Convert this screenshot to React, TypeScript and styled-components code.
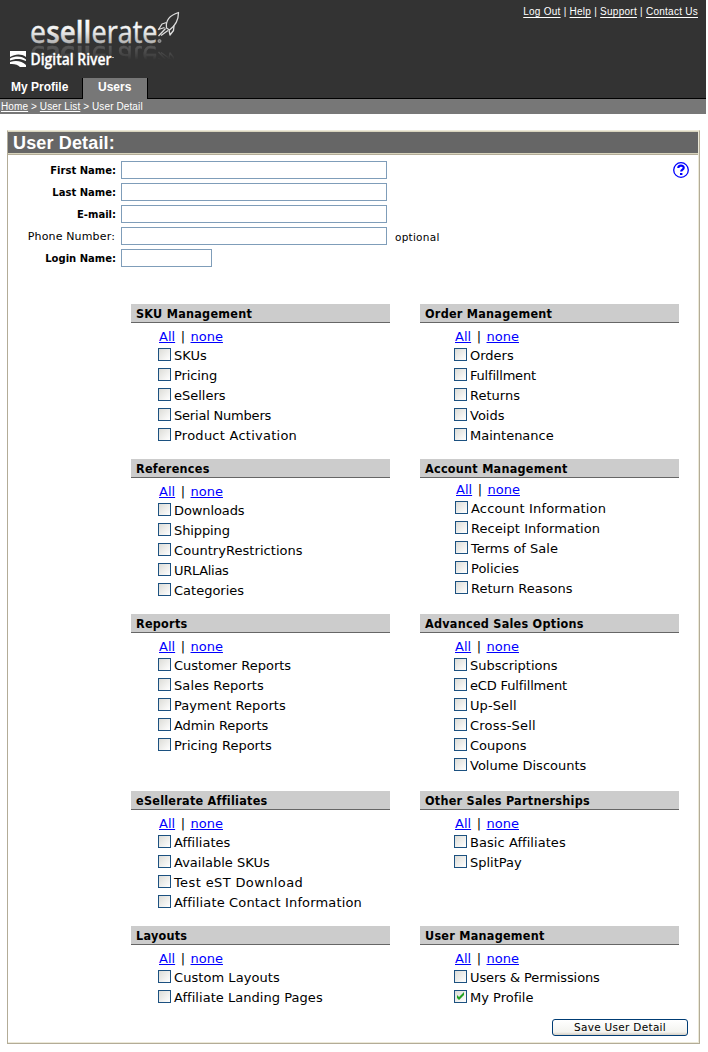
import React from "react";
import styled, { createGlobalStyle } from "styled-components";

const Global = createGlobalStyle`
  body { margin: 0; background: #fff; color: #000; }
  * { box-sizing: border-box; }
`;

const verdana = `Verdana, "DejaVu Sans", sans-serif`;
const arial = `Arial, "Liberation Sans", sans-serif`;

const Page = styled.div`
  width: 708px;
  height: 1052px;
  overflow: hidden;
  font-family: ${verdana};
  font-variant-ligatures: none;
`;

const Header = styled.header`
  width: 706px;
  height: 99px;
  background: #333;
  border-bottom: 1px solid #000;
  display: flex;
  flex-direction: column;
  justify-content: space-between;
`;

const HeaderTop = styled.div`
  display: flex;
  justify-content: space-between;
  height: 78px;
`;

const Logo = styled.svg`
  display: block;
  width: 200px;
  height: 78px;
`;

const UtilityNav = styled.nav`
  padding: 5px 8px 0 0;
  color: #fff;
  font: 10px/13px ${arial};
  letter-spacing: 0.26px;
  white-space: nowrap;
`;

const UtilityLink = styled.a`
  color: #fff;
  text-decoration: underline;
  text-underline-offset: 2px;
`;

const Tabs = styled.nav`
  display: flex;
  height: 20px;
  flex: none;
`;

const Tab = styled.a<{ $active?: boolean }>`
  width: ${(p) => (p.$active ? 66 : 82)}px;
  padding-left: ${(p) => (p.$active ? 15 : 11)}px;
  font: bold 12px/18px ${arial};
  color: #fff;
  background: ${(p) => (p.$active ? "#777" : "transparent")};
  border: solid #000;
  border-width: ${(p) => (p.$active ? "0 1px" : "0")};
  height: ${(p) => (p.$active ? 21 : 20)}px;
`;

const Breadcrumb = styled.div`
  width: 706px;
  height: 15px;
  background: #777;
  color: #fff;
  font: 10px/15px ${arial};
  letter-spacing: 0.11px;
  padding-left: 1px;
  white-space: nowrap;
`;

const Crumb = styled.a`
  color: #fff;
  text-decoration: underline;
`;

const Panel = styled.main`
  width: 693px;
  height: 914px;
  margin: 16px 0 0 7px;
  border: 1px solid #b3ac97;
  border-top-color: #ece9d8;
  box-shadow: inset -1px -1px #ece9d8;
`;

const PanelTitle = styled.h1`
  margin: 0 1px 0 0;
  height: 23px;
  background: #666;
  border: solid #d8d4bd;
  border-width: 1px 0;
  box-shadow: 0 1px #b3ac97;
  color: #fff;
  font: bold 18px/22px ${arial};
  letter-spacing: 0.15px;
  padding-left: 5px;
`;

const Form = styled.form`
  display: flex;
  flex-direction: column;
`;

const FormTop = styled.div`
  display: flex;
  justify-content: space-between;
  padding: 7px 9px 0 0;
  height: 150px;
`;

const Fields = styled.div`
  display: flex;
  flex-direction: column;
  gap: 4px;
`;

const Field = styled.div`
  display: flex;
  height: 18px;
`;

const Label = styled.label<{ $optional?: boolean }>`
  width: 108px;
  margin-right: 5px;
  padding-right: ${(p) => (p.$optional ? 1 : 0)}px;
  text-align: right;
  font-size: ${(p) => (p.$optional ? 11 : 10)}px;
  letter-spacing: ${(p) => (p.$optional ? 0.15 : 0)}px;
  font-weight: ${(p) => (p.$optional ? 400 : 700)};
  line-height: ${(p) => (p.$optional ? 20 : 19)}px;
  white-space: nowrap;
`;

const TextInput = styled.input<{ $short?: boolean }>`
  width: ${(p) => (p.$short ? 91 : 266)}px;
  height: 18px;
  padding: 0 3px;
  border: 1px solid #7f9db9;
  background: #fff;
`;

const Hint = styled.span`
  font-size: 10.5px;
  line-height: 20px;
  letter-spacing: 0.25px;
  margin-left: 8px;
`;

const HelpIcon = styled.svg`
  width: 18px;
  height: 18px;
`;

const Permissions = styled.div`
  display: grid;
  grid-template-columns: 259px 259px;
  grid-template-rows: 155px 155px 177px 135px 93px;
  column-gap: 30px;
  padding-left: 123px;
`;

const Group = styled.section``;

const GroupTitle = styled.h2`
  margin: 0;
  height: 19px;
  padding-left: 5px;
  background: #ccc;
  border-bottom: 1px solid #666;
  font: bold 12.5px/19px "DejaVu Sans Condensed", "DejaVu Sans", sans-serif;
  font-stretch: condensed;
  letter-spacing: 0.26px;
`;

const GroupBody = styled.div<{ $indent: number; $lift?: boolean }>`
  padding-left: ${(p) => p.$indent}px;
  margin-top: ${(p) => (p.$lift ? -2 : 0)}px;
  font-size: 13px;
  white-space: nowrap;
`;

const SelectLinks = styled.div`
  display: flex;
  gap: 5.5px;
  height: 22px;
  line-height: 28px;
  padding-left: 1px;
`;

const SelectLink = styled.a`
  color: #00f;
  text-decoration: underline;
`;

const Option = styled.label`
  display: flex;
  gap: 3px;
  height: 20px;
  line-height: 22px;
`;

const OptionText = styled.span<{ $tracking: number }>`
  letter-spacing: ${(p) => p.$tracking}px;
`;

const CheckBox = styled.span`
  display: grid;
  height: 13px;
  margin-top: 3px;
`;

const Check = styled.input`
  grid-area: 1 / 1;
  appearance: none;
  margin: 0;
  width: 13px;
  height: 13px;
  border: 1px solid #1c5180;
  background: linear-gradient(135deg, #dcdcd7, #fff);
`;

const Tick = styled.svg`
  grid-area: 1 / 1;
  width: 13px;
  height: 13px;
  pointer-events: none;
`;

const Actions = styled.div`
  display: flex;
  justify-content: flex-end;
  padding-right: 11px;
`;

const SaveButton = styled.button`
  width: 136px;
  height: 17px;
  padding: 0;
  border: 1px solid #003c74;
  border-radius: 3px;
  background: linear-gradient(#fff, #f3f3ef 80%, #d6d0c5);
  font: 10.5px/15px ${verdana};
  letter-spacing: 0.3px;
  color: #000;
`;

type GroupData = { title: string; options: string[]; indent: number; lift?: boolean; checked?: string };

const groups: GroupData[] = [
  { title: "SKU Management", indent: 27, options: ["SKUs", "Pricing", "eSellers", "Serial Numbers", "Product Activation"] },
  { title: "Order Management", indent: 34, options: ["Orders", "Fulfillment", "Returns", "Voids", "Maintenance"] },
  { title: "References", indent: 27, options: ["Downloads", "Shipping", "CountryRestrictions", "URLAlias", "Categories"] },
  { title: "Account Management", indent: 35, lift: true, options: ["Account Information", "Receipt Information", "Terms of Sale", "Policies", "Return Reasons"] },
  { title: "Reports", indent: 27, options: ["Customer Reports", "Sales Reports", "Payment Reports", "Admin Reports", "Pricing Reports"] },
  { title: "Advanced Sales Options", indent: 34, options: ["Subscriptions", "eCD Fulfillment", "Up-Sell", "Cross-Sell", "Coupons", "Volume Discounts"] },
  { title: "eSellerate Affiliates", indent: 27, options: ["Affiliates", "Available SKUs", "Test eST Download", "Affiliate Contact Information"] },
  { title: "Other Sales Partnerships", indent: 34, options: ["Basic Affiliates", "SplitPay"] },
  { title: "Layouts", indent: 27, options: ["Custom Layouts", "Affiliate Landing Pages"] },
  { title: "User Management", indent: 34, options: ["Users & Permissions", "My Profile"], checked: "My Profile" },
];

const tracking: Record<string, number> = {
  Pricing: -0.1,
  "Serial Numbers": -0.2,
  "Product Activation": 0.25,
  Fulfillment: -0.2,
  Downloads: -0.1,
  Shipping: -0.1,
  CountryRestrictions: 0.05,
  URLAlias: -0.3,
  "Account Information": 0.17,
  "Receipt Information": 0.06,
  "Sales Reports": 0.1,
  "Payment Reports": 0.06,
  "Admin Reports": -0.1,
  "eCD Fulfillment": -0.15,
  "Up-Sell": 0.1,
  "Cross-Sell": 0.2,
  "Test eST Download": 0.38,
  "Affiliate Contact Information": 0.15,
  "Basic Affiliates": 0.06,
  "Custom Layouts": 0.06,
  "Affiliate Landing Pages": 0.04,
  "Users & Permissions": -0.1,
};

const fields = [
  { label: "First Name:" },
  { label: "Last Name:" },
  { label: "E-mail:" },
  { label: "Phone Number:", optional: true },
  { label: "Login Name:", short: true },
];

function BrandLogo() {
  return (
    <Logo viewBox="0 0 200 78">
      <defs>
        <linearGradient id="metal" gradientUnits="userSpaceOnUse" x1="0" y1="19" x2="0" y2="43">
          <stop offset="0" stopColor="#fff" />
          <stop offset="0.5" stopColor="#eee" />
          <stop offset="1" stopColor="#b4b4b4" />
        </linearGradient>
        <linearGradient id="fade" gradientUnits="userSpaceOnUse" x1="0" y1="44" x2="0" y2="60">
          <stop offset="0" stopColor="#fff" stopOpacity="0.3" />
          <stop offset="1" stopColor="#fff" stopOpacity="0" />
        </linearGradient>
        <mask id="reflection" maskUnits="userSpaceOnUse" x="0" y="43" width="200" height="30">
          <rect x="0" y="43" width="200" height="30" fill="url(#fade)" />
        </mask>
      </defs>
      <g id="wordmark">
        <g fontFamily="Open Sans" fontSize="30.500" fill="url(#metal)" stroke="url(#metal)" strokeWidth="0.400">
          <text x="30" y="42.500" textLength="16" lengthAdjust="spacingAndGlyphs">e</text>
          <text x="46.200" y="42.500" textLength="45" lengthAdjust="spacingAndGlyphs" fontWeight="600">sell</text>
          <text x="91.500" y="42.500" textLength="66" lengthAdjust="spacingAndGlyphs">erate</text>
        </g>
        <g fill="none" stroke="#ddd" strokeWidth="1.300" strokeLinejoin="round">
          <path d="M166.500 28C165.500 21 169 15.500 178.500 12.500C178.500 20 175 26 169.500 30Z" />
          <path d="M166.500 22.500L162 24L158.500 29.500L164.500 27.500M174 25.500L173.500 30.500L170 35L169 30" />
          <path d="M165.500 28.500L158.500 36M168 30.500L161 35.500" />
        </g>
      </g>
      <g mask="url(#reflection)">
        <use href="#wordmark" transform="translate(0 88) scale(1 -1)" />
      </g>
      <circle cx="159.500" cy="41" r="1.500" fill="#777" stroke="#aaa" strokeWidth="0.800" />
      <path fill="#fff" d="M10 51H26V57C21 53.500 15 54 10 57Z M10 58.500C16 55.500 22 56 26 59.500V61C20 58 15 58.500 10 60.500Z M10 62C17 60 22 61.500 26 65V67H20C18 64.500 14 63.500 10 64Z" />
      <text x="30.500" y="64.500" fontFamily="Open Sans" fontWeight="600" fontSize="15.500" textLength="81" lengthAdjust="spacingAndGlyphs" fill="#fff" stroke="#fff" strokeWidth="0.300">
        Digital River
      </text>
      <path d="M112 57.500h2" stroke="#aaa" strokeWidth="1" />
    </Logo>
  );
}

function PermissionGroup({ group }: { group: GroupData }) {
  return (
    <Group>
      <GroupTitle>{group.title}</GroupTitle>
      <GroupBody $indent={group.indent} $lift={group.lift}>
        <SelectLinks>
          <SelectLink>All</SelectLink>
          <span>|</span>
          <SelectLink>none</SelectLink>
        </SelectLinks>
        {group.options.map((option) => (
          <Option key={option}>
            <CheckBox>
              <Check type="checkbox" defaultChecked={option === group.checked} />
              {option === group.checked && (
                <Tick viewBox="0 0 13 13">
                  <path d="M3 5v3l2 2 5-5V2L5 7Z" fill="#21a121" />
                </Tick>
              )}
            </CheckBox>
            <OptionText $tracking={tracking[option] ?? 0}>{option}</OptionText>
          </Option>
        ))}
      </GroupBody>
    </Group>
  );
}

export default function App() {
  return (
    <Page>
      <Global />
      <Header>
        <HeaderTop>
          <BrandLogo />
          <UtilityNav>
            <UtilityLink>Log Out</UtilityLink> | <UtilityLink>Help</UtilityLink> | <UtilityLink>Support</UtilityLink> |{" "}
            <UtilityLink>Contact Us</UtilityLink>
          </UtilityNav>
        </HeaderTop>
        <Tabs>
          <Tab>My Profile</Tab>
          <Tab $active>Users</Tab>
        </Tabs>
      </Header>
      <Breadcrumb>
        <Crumb>Home</Crumb> &gt; <Crumb>User List</Crumb> &gt; User Detail
      </Breadcrumb>
      <Panel>
        <PanelTitle>User Detail:</PanelTitle>
        <Form>
          <FormTop>
            <Fields>
              {fields.map((f) => (
                <Field key={f.label}>
                  <Label $optional={f.optional}>{f.label}</Label>
                  <TextInput $short={f.short} />
                  {f.optional && <Hint>optional</Hint>}
                </Field>
              ))}
            </Fields>
            <HelpIcon viewBox="0 0 18 18">
              <circle cx="9" cy="9" r="7.300" fill="none" stroke="#00f" strokeWidth="1.300" />
              <path d="M6.300 7C6.300 3.900 11.700 3.900 11.700 6.800C11.700 8.700 9.200 8.600 9.200 10.600" fill="none" stroke="#00f" strokeWidth="2.200" />
              <rect x="8" y="12" width="2.400" height="2" fill="#00f" />
            </HelpIcon>
          </FormTop>
          <Permissions>
            {groups.map((g) => (
              <PermissionGroup key={g.title} group={g} />
            ))}
          </Permissions>
          <Actions>
            <SaveButton type="button">Save User Detail</SaveButton>
          </Actions>
        </Form>
      </Panel>
    </Page>
  );
}
